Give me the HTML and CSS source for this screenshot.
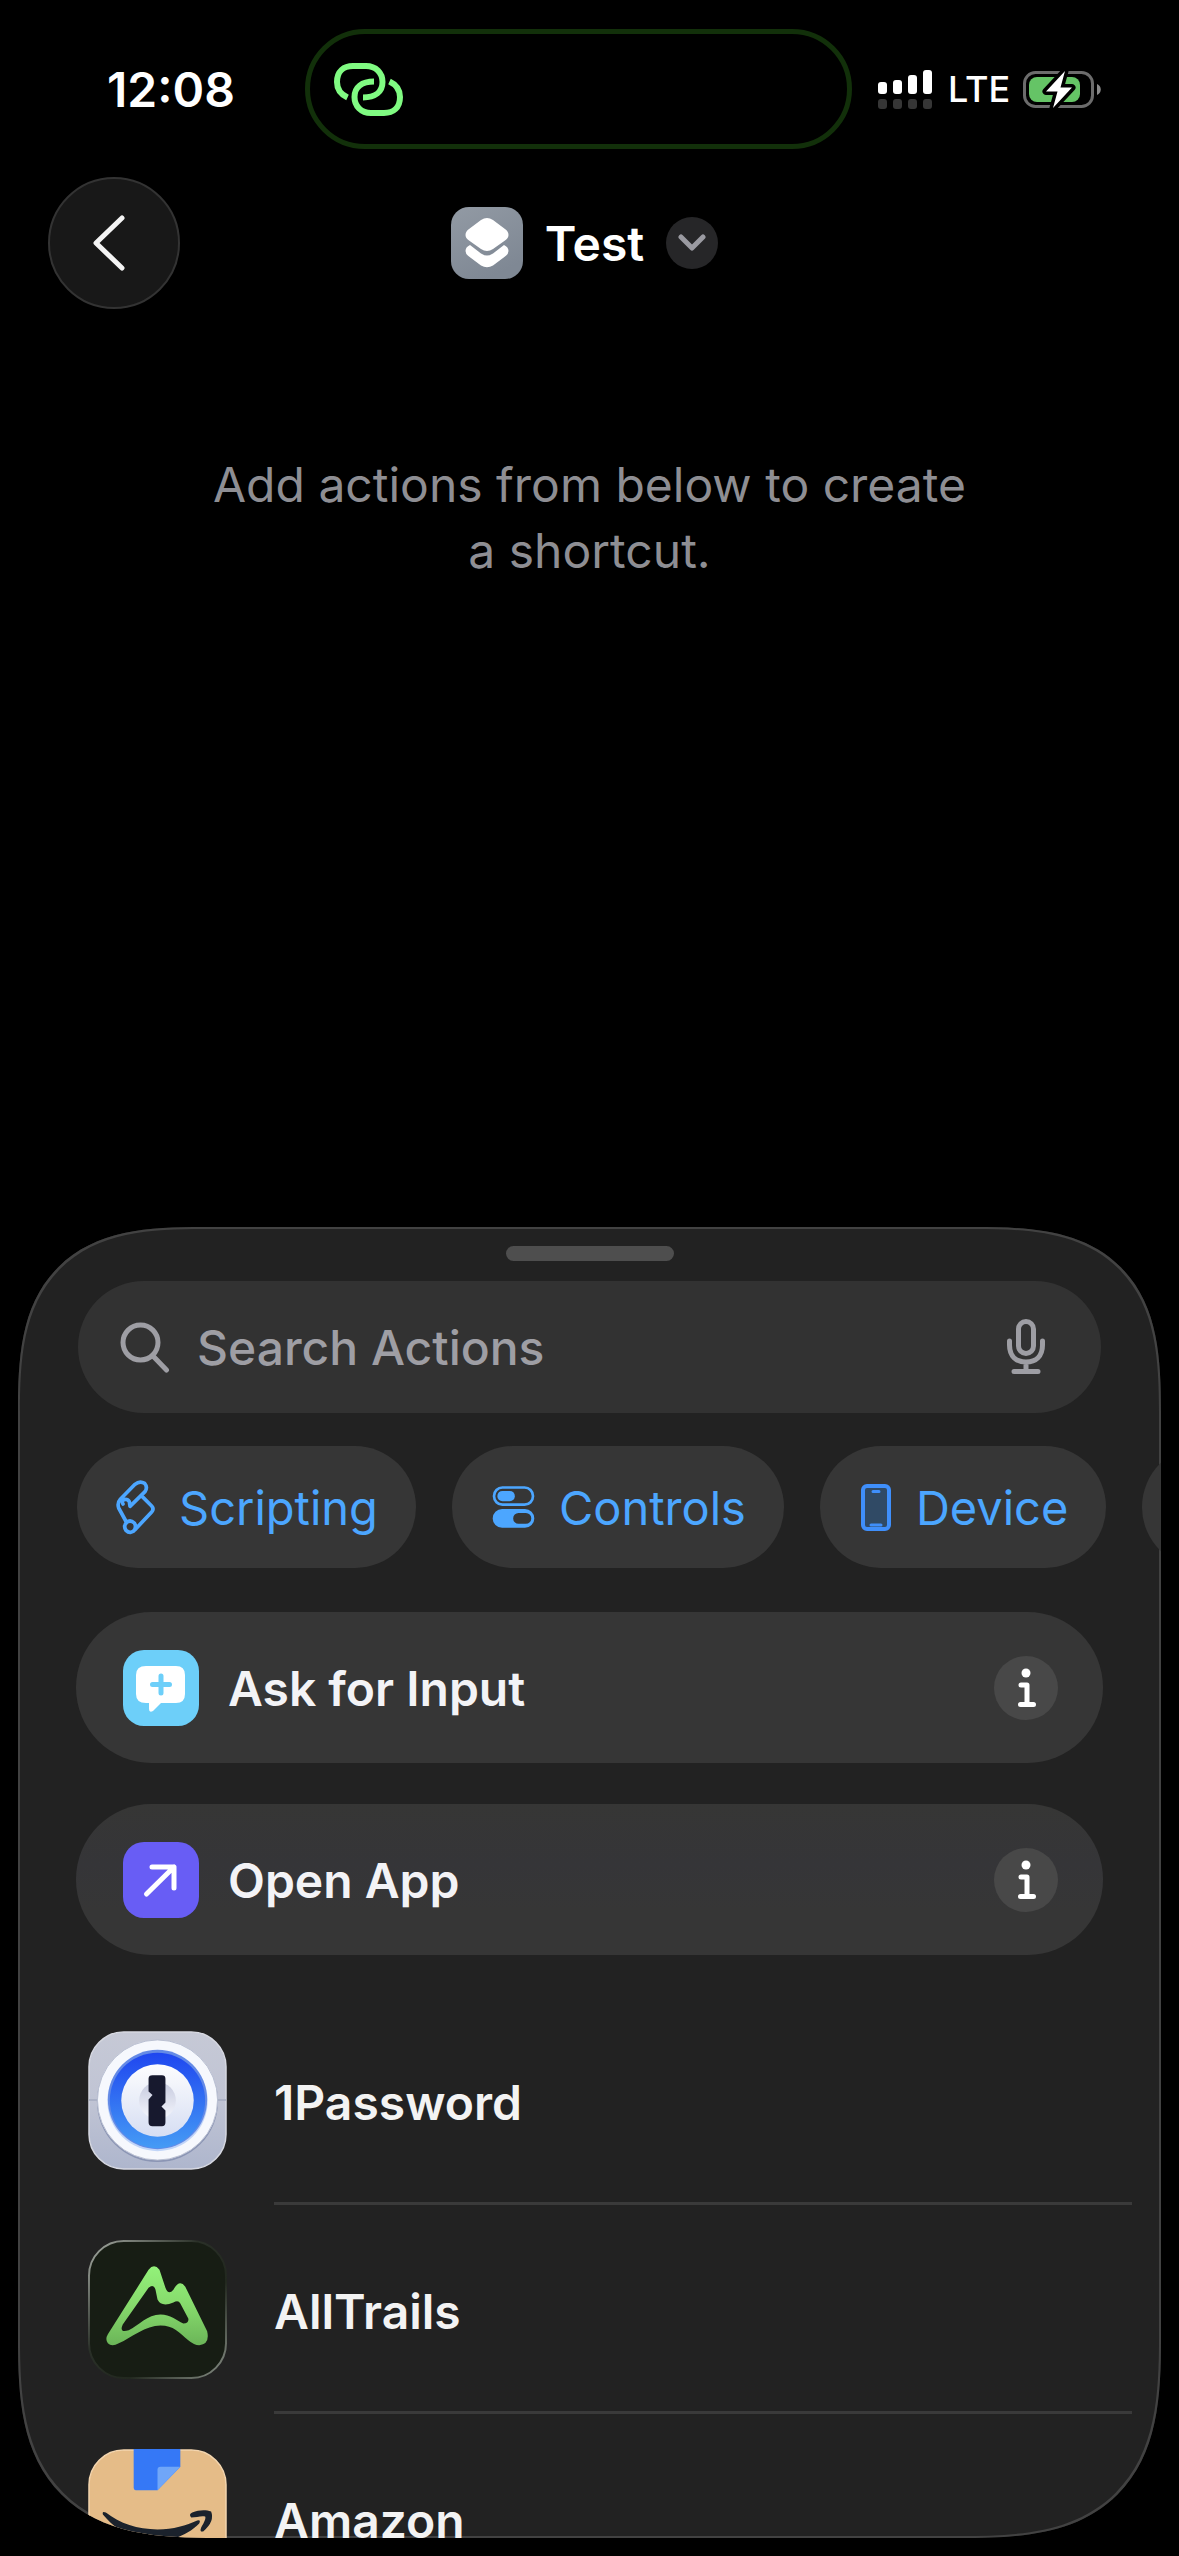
FILE: index.html
```html
<!DOCTYPE html>
<html lang="en">
<head>
<meta charset="utf-8">
<meta name="viewport" content="width=device-width, initial-scale=1">
<title>Test</title>
<link rel="stylesheet" href="styles.css">
</head>
<body>
<div class="screen">
  <header class="status">
    <time class="clock">12:08</time>
    <div class="island">
      <svg class="link-icon" viewBox="0 0 69 53" aria-hidden="true">
        <path d="M13.500 34.500C6 31 3 25 3 19C3 8 10 3 19 3H32C42 3 48.500 10 48.500 19C48.500 29 41 34.500 29 34.500"/>
        <path d="M55.500 18.500C63 22 66 28 66 34C66 45 59 50 50 50H37C27 50 20.500 43 20.500 34C20.500 24 28 18.500 40 18.500"/>
      </svg>
    </div>
    <div class="indicators">
      <svg class="signal" viewBox="0 0 54 39" aria-hidden="true">
        <g fill="#fff"><rect y="12" width="9" height="12" rx="3"/><rect x="15" y="10" width="9" height="14" rx="3"/><rect x="30" y="5" width="9" height="19" rx="3"/><rect x="45" width="9" height="24" rx="3"/></g>
        <g fill="#363636"><rect y="29" width="9" height="10" rx="3"/><rect x="15" y="29" width="9" height="10" rx="3"/><rect x="30" y="29" width="9" height="10" rx="3"/><rect x="45" y="29" width="9" height="10" rx="3"/></g>
      </svg>
      <span class="network">LTE</span>
      <svg class="battery" viewBox="0 0 78 37" aria-hidden="true">
        <rect x="1.500" y="1.500" width="68" height="34" rx="11" fill="none" stroke="#6c6c6c" stroke-width="3"/>
        <rect x="6" y="6" width="51" height="25" rx="8" fill="#65c466"/>
        <path d="M74 13C79 15 79 22 74 24Z" fill="#8a8a8a"/>
        <path d="M42 0L23 20.500H34.500L30 37L49 16.500H37.500Z" fill="#fff" stroke="#000" stroke-width="7" stroke-linejoin="round" paint-order="stroke"/>
      </svg>
    </div>
  </header>

  <nav class="nav">
    <button class="back" type="button" aria-label="Back">
      <svg viewBox="0 0 36 58" aria-hidden="true"><path d="M31 4L5 29L31 54"/></svg>
    </button>
    <button class="title" type="button">
      <svg class="title-icon" viewBox="0 0 72 72" aria-hidden="true">
        <defs><linearGradient id="slate" x1="0" y1="0" x2=".5" y2="1"><stop offset="0" stop-color="#929aa4"/><stop offset="1" stop-color="#7f8894"/></linearGradient></defs>
        <rect width="72" height="72" rx="18" fill="url(#slate)"/>
        <g fill="#fff"><path d="M30 13Q36 9 42 13L54 22Q57.500 24.500 57.500 28Q57.500 31 54 33.500L42 42Q36 46 30 42L18 33.500Q14.500 31 14.500 28Q14.500 24.500 18 22Z"/><path d="M19 38L30 46.500Q36 50.500 42 46.500L53 38Q57.500 40 57.500 44Q57.500 47 54 49.500L42 58.500Q36 62 30 58.500L18 49.500Q14.500 47 14.500 44Q14.500 40 19 38Z"/></g>
      </svg>
      <span>Test</span>
      <span class="title-chevron"><svg viewBox="0 0 28 18" aria-hidden="true"><path d="M3 3L14 14L25 3"/></svg></span>
    </button>
  </nav>

  <main class="workspace">
    <p class="hint">Add actions from below to create a shortcut.</p>
  </main>

  <section class="sheet" aria-label="Actions">
    <div class="grabber"></div>
    <div class="search">
      <svg class="search-icon" viewBox="0 0 50 51" aria-hidden="true"><circle cx="20.500" cy="20.500" r="17.500"/><path d="M33 34L46.500 48"/></svg>
      <input class="search-input" type="search" placeholder="Search Actions" aria-label="Search Actions">
      <button class="mic" type="button" aria-label="Dictate">
        <svg viewBox="0 0 38 56" aria-hidden="true"><rect x="11.500" y="2.500" width="15" height="32" rx="7.500"/><path d="M2.500 22V26C2.500 37 9 43 19 43S35.500 37 35.500 26V22M19 43V52M7 52.500H31"/></svg>
      </button>
    </div>

    <div class="chips">
      <button class="chip" type="button">
        <svg class="scroll-icon" viewBox="18 22 126 168" aria-hidden="true"><path d="M97 72L128 103Q136 112 128 121L78 174Q64 189 51 176Q42 163 53 152Q64 143 76 154Q84 166 74 178M52 151L29 109Q24 94 34 83L78 38Q92 26 107 35Q117 47 108 60L63 104L61 90Q55 80 44 84Q37 90 42 97"/></svg>
        Scripting
      </button>
      <button class="chip" type="button">
        <svg class="toggle-icon" viewBox="16 40 140 130" aria-hidden="true"><rect x="28" y="47" width="116" height="51" rx="25" fill="none" stroke="currentColor" stroke-width="8"/><rect x="38" y="57" width="52" height="31" rx="15" fill="currentColor"/><path fill="currentColor" fill-rule="evenodd" d="M52 111H120A28 28 0 0 1 120 167H52A28 28 0 0 1 52 111ZM101 123A16 16 0 0 0 101 155H123A16 16 0 0 0 123 123Z"/></svg>
        Controls
      </button>
      <button class="chip" type="button">
        <svg class="phone-icon" viewBox="-3 0 36 47" aria-hidden="true"><rect x="2" y="2" width="26" height="43" rx="4" fill="#304a65" stroke="#3f8ffb" stroke-width="4"/><path d="M12 7.500H18M10 41H20" stroke="#3f8ffb" stroke-width="3" stroke-linecap="round"/></svg>
        Device
      </button>
      <button class="chip" type="button" aria-label="More"></button>
    </div>

    <ul class="cards">
      <li class="card">
        <svg class="card-icon" viewBox="0 0 76 76" aria-hidden="true"><rect width="76" height="76" rx="21" fill="#6dcff9"/><path fill="#fff" d="M23 16H53Q62 16 62 25V44Q62 53 53 53H38L30 61Q26 63 26 59V53H23Q13 53 13 44V25Q13 16 23 16Z"/><path d="M38 26V43M29.500 34.500H46.500" stroke="#6dcff9" stroke-width="5" stroke-linecap="round"/></svg>
        <span class="card-name">Ask for Input</span>
        <button class="info" type="button" aria-label="About Ask for Input"><svg viewBox="0 0 20 40" aria-hidden="true"><circle cx="10" cy="5" r="4.500" fill="#fff"/><path d="M5 17H11V36M4.500 36.500H17.500" fill="none" stroke="#fff" stroke-width="5" stroke-linecap="round" stroke-linejoin="round"/></svg></button>
      </li>
      <li class="card card-tinted">
        <svg class="card-icon" viewBox="0 0 76 76" aria-hidden="true"><rect width="76" height="76" rx="21" fill="#685df5"/><path d="M29 25H51V46M51 25L23.500 52" fill="none" stroke="#fff" stroke-width="5" stroke-linecap="round" stroke-linejoin="round"/></svg>
        <span class="card-name">Open App</span>
        <button class="info" type="button" aria-label="About Open App"><svg viewBox="0 0 20 40" aria-hidden="true"><circle cx="10" cy="5" r="4.500" fill="#fff"/><path d="M5 17H11V36M4.500 36.500H17.500" fill="none" stroke="#fff" stroke-width="5" stroke-linecap="round" stroke-linejoin="round"/></svg></button>
      </li>
    </ul>

    <ul class="apps">
      <li class="app">
        <svg class="app-icon" viewBox="0 0 140 140" aria-hidden="true">
          <defs>
            <linearGradient id="steel" x2="0" y2="1"><stop offset="0" stop-color="#c6c9d6"/><stop offset=".5" stop-color="#c0c4d4"/><stop offset="1" stop-color="#aeb6cd"/></linearGradient>
            <linearGradient id="ring" x2="0" y2="1"><stop offset="0" stop-color="#1f46ef"/><stop offset="1" stop-color="#459bf5"/></linearGradient>
            <linearGradient id="dial" x2="0" y2="1"><stop offset="0" stop-color="#fdfdfe"/><stop offset="1" stop-color="#d6def3"/></linearGradient>
            <linearGradient id="hub" x2="0" y2="1"><stop offset="0" stop-color="#c6cade"/><stop offset="1" stop-color="#f4f6fd"/></linearGradient>
          </defs>
          <rect x="1" y="1" width="138" height="138" rx="35" fill="url(#steel)" stroke="#d6d8e1" stroke-width="1.500"/>
          <path d="M1 69.500H139" stroke="#a4abc0" stroke-width="1.500"/>
          <circle cx="70" cy="71" r="61" fill="#8b95b4"/>
          <circle cx="70" cy="69.500" r="60.500" fill="#f6f8fd" stroke="#b9bfd2"/>
          <circle cx="70" cy="70.500" r="50.500" fill="#c1d5f8"/>
          <circle cx="70" cy="69" r="50" fill="#648ae6"/>
          <circle cx="70" cy="70" r="48" fill="url(#ring)"/>
          <circle cx="70" cy="70" r="36.500" fill="url(#dial)"/>
          <circle cx="70" cy="70" r="18.500" fill="url(#hub)"/>
          <path fill="#17192e" d="M65 44.500H74.500Q78 44.500 78 48V72L74 76L78 80V92Q78 96 74.500 96H65Q61 96 61 92V69L65 64.500L61 61V48Q61 44.500 65 44.500Z"/>
        </svg>
        <span class="app-name">1Password</span>
      </li>
      <li class="app">
        <svg class="app-icon" viewBox="0 0 140 140" aria-hidden="true">
          <defs>
            <linearGradient id="peak" x2="0" y2="1"><stop offset="0" stop-color="#93f27a"/><stop offset=".5" stop-color="#86da6c"/><stop offset="1" stop-color="#6bb558"/></linearGradient>
            <linearGradient id="rim" x1="0" y1="0" x2="1" y2="1"><stop offset="0" stop-color="#a9aea7"/><stop offset=".4" stop-color="#2a3028"/><stop offset=".65" stop-color="#22281f"/><stop offset="1" stop-color="#8a9188"/></linearGradient>
          </defs>
          <rect x="1" y="1" width="138" height="138" rx="35" fill="#171d14" stroke="url(#rim)" stroke-width="2"/>
          <path fill="url(#peak)" fill-rule="evenodd" d="M61 30Q66.500 23 72 30L78 48Q81 56 86 50Q92 39 98 47L120 92Q123 105 112 106Q107 106 101 101C92 93 86 86 73 86C58 86 44 98 31 104Q24 108 20 104Q17 100 20 95ZM61 48L35 85Q31 94 41 91C51 86 60 75 73 75C83 75 89 81 96 84Q102 84 101 79L93 64Q91 60 86 63Q74 68 70 60L68 50Q66 44 61 48Z"/>
        </svg>
        <span class="app-name">AllTrails</span>
      </li>
      <li class="app">
        <svg class="app-icon" viewBox="0 0 140 140" aria-hidden="true">
          <rect x="1" y="1" width="138" height="138" rx="35" fill="#e5bc88" stroke="#f3d5ae" stroke-width="1.500"/>
          <path fill="#3578f6" d="M46 0H93V18L70 41.500H48Q46 41.500 46 39Z"/>
          <path fill="#70a6f8" d="M93 18L70 41.500V21Q70 18 73 18Z"/>
          <path fill="#1b222c" d="M15 66Q14 62 18 64C32 75 50 81 70 81C86 81 99 77 110 72Q114 71 112 75C101 86 87 92 70 92C47 92 28 82 15 66Z"/>
          <path fill="#1b222c" d="M104 69Q101 66 105 64C112 61 119 61 124 63Q128 73 116 83Q112 84 114 79C117 74 119 70 118 68C114 67 109 69 104 69Z"/>
        </svg>
        <span class="app-name">Amazon</span>
      </li>
    </ul>
  </section>
</div>
</body>
</html>
```
FILE: styles.css
```css
* { box-sizing: border-box; }

body {
  margin: 0;
  background: #000;
  color: #fff;
  font-family: Inter, "Liberation Sans", sans-serif;
  font-size: 48px;
}

button {
  margin: 0;
  padding: 0;
  border: 0;
  background: none;
  color: inherit;
  font: inherit;
}

ul { margin: 0; padding: 0; list-style: none; }

svg { display: block; flex: none; }

.screen {
  display: flex;
  flex-direction: column;
  height: 100vh;
  overflow: hidden;
}

/* Status bar */
.status {
  display: grid;
  grid-template-columns: 305px 1fr 327px;
  align-items: center;
  padding-top: 29px;
}

.clock { padding-left: 107px; font-weight: 600; }

.island {
  display: flex;
  align-items: center;
  height: 120px;
  padding-left: 24px;
  border: 5px solid #12300a;
  border-radius: 60px;
}

.link-icon {
  width: 69px;
  height: 53px;
  fill: none;
  stroke: #80fb82;
  stroke-width: 6;
}

.indicators { display: flex; align-items: center; padding-left: 26px; }
.signal { width: 54px; height: 39px; }
.network { width: 91px; padding-left: 16px; font-size: 36px; font-weight: 500; }
.battery { width: 78px; height: 37px; }

/* Navigation bar */
.nav {
  display: grid;
  grid-template-columns: 1fr auto 1fr;
  align-items: center;
  margin-top: 28px;
  padding: 0 58px 0 48px;
}

.back {
  display: grid;
  place-items: center;
  width: 132px;
  height: 132px;
  padding-right: 10px;
  border: 2px solid #333;
  border-radius: 50%;
  background: #181818;
}

.back svg {
  width: 36px;
  height: 58px;
  fill: none;
  stroke: #f4f4f4;
  stroke-width: 5;
  stroke-linecap: round;
  stroke-linejoin: round;
}

.title { display: flex; align-items: center; gap: 22px; font-weight: 600; }
.title-icon { width: 72px; height: 72px; }

.title-chevron {
  display: grid;
  place-items: center;
  width: 52px;
  height: 52px;
  border-radius: 50%;
  background: #262628;
}

.title-chevron svg {
  width: 28px;
  height: 18px;
  fill: none;
  stroke: #9a9aa1;
  stroke-width: 5;
  stroke-linecap: round;
  stroke-linejoin: round;
}

/* Empty editor */
.workspace { flex: 1; padding-top: 143px; }

.hint {
  max-width: 768px;
  margin: 0 auto;
  color: #8e8e93;
  line-height: 66px;
  text-align: center;
}

/* Action library */
.sheet {
  flex: none;
  height: calc(50vh + 33px);
  margin: 0 18px 18px;
  overflow: hidden;
  border-radius: 134px 134px 150px 150px;
  background: #222;
  box-shadow: inset 0 0 0 2px #424242;
}

@supports (corner-shape: superellipse(1.5)) {
  .sheet {
    border-radius: 185px 185px 200px 200px;
    corner-shape: superellipse(1.5);
  }
}

.grabber {
  width: 168px;
  height: 15px;
  margin: 19px auto 20px;
  border-radius: 8px;
  background: #4e4e4e;
}

.search {
  display: flex;
  align-items: center;
  height: 132px;
  margin: 0 60px;
  padding: 0 56px 0 42px;
  border-radius: 66px;
  background: #323232;
}

.search-icon,
.mic svg {
  fill: none;
  stroke: #9e9ea4;
  stroke-width: 5;
  stroke-linecap: round;
}

.search-icon { width: 50px; height: 51px; }

.search-input {
  flex: 1;
  min-width: 0;
  padding: 0 0 0 27px;
  border: 0;
  outline: 0;
  background: none;
  color: #fff;
  font: inherit;
  font-weight: 500;
}

.search-input::placeholder { color: #9e9ea4; opacity: 1; }

.mic svg { width: 38px; height: 56px; }

.chips { display: flex; gap: 36px; margin: 33px 0 44px 59px; }

.chip {
  display: flex;
  flex: none;
  align-items: center;
  gap: 22px;
  height: 122px;
  min-width: 175px;
  padding: 0 38px;
  border-radius: 61px;
  background: #363636;
  color: #4ca6ff;
  font-size: 47px;
}

.scroll-icon {
  width: 42px;
  height: 56px;
  fill: none;
  stroke: currentColor;
  stroke-width: 11;
  stroke-linecap: round;
  stroke-linejoin: round;
}

.toggle-icon { width: 47px; height: 44px; }
.phone-icon { width: 36px; height: 47px; }

.cards { display: grid; gap: 41px; margin: 0 58px 41px; }

.card {
  display: flex;
  align-items: center;
  height: 151px;
  padding: 0 45px 0 47px;
  border-radius: 76px;
  background: #363636;
  color: #f3f3f6;
  font-weight: 600;
}

.card-tinted { background: linear-gradient(#363635, #353538 40%, #363636 70%); }
.card-icon { width: 76px; height: 76px; }
.card-name { flex: 1; padding: 2px 0 0 29px; }

.info {
  display: grid;
  place-items: center;
  width: 64px;
  height: 64px;
  border-radius: 50%;
  background: #484848;
}

.info svg { width: 20px; height: 40px; }

.app {
  display: flex;
  align-items: center;
  height: 209px;
  padding: 0 29px 0 70px;
}

.app-icon { width: 139px; height: 139px; }

.app-name {
  display: flex;
  flex: 1;
  align-items: center;
  align-self: stretch;
  margin-left: 47px;
  padding-top: 6px;
  border-bottom: 3px solid #3a3a3a;
  color: #f3f3f3;
  font-weight: 600;
}
```
